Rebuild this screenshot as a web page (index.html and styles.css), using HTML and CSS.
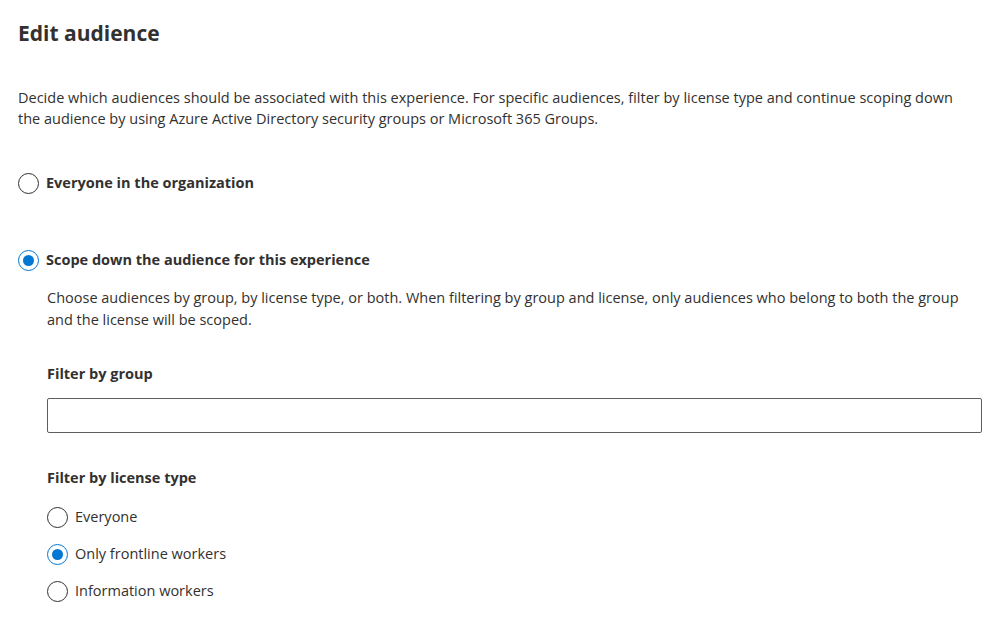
FILE: index.html
```html
<!DOCTYPE html>
<html lang="en">
<head>
<meta charset="utf-8">
<title>Edit audience</title>
<link rel="stylesheet" href="styles.css">
</head>
<body>
<main class="page">
  <h1 class="title">Edit audience</h1>
  <p class="intro">Decide which audiences should be associated with this experience. For specific audiences, filter by license type and continue scoping down the audience by using Azure Active Directory security groups or Microsoft 365 Groups.</p>

  <label class="radio radio-main first">
    <span class="circle"></span>
    <span class="label-text strong">Everyone in the organization</span>
  </label>

  <label class="radio radio-main second">
    <span class="circle checked"></span>
    <span class="label-text strong">Scope down the audience for this experience</span>
  </label>

  <section class="scope">
    <p class="scope-desc">Choose audiences by group, by license type, or both. When filtering by group and license, only audiences who belong to both the group and the license will be scoped.</p>

    <div class="field-label group-label">Filter by group</div>
    <div class="text-input"></div>

    <div class="field-label license-label">Filter by license type</div>
    <div class="options">
      <label class="radio">
        <span class="circle"></span>
        <span class="label-text">Everyone</span>
      </label>
      <label class="radio">
        <span class="circle checked"></span>
        <span class="label-text">Only frontline workers</span>
      </label>
      <label class="radio">
        <span class="circle"></span>
        <span class="label-text">Information workers</span>
      </label>
    </div>
  </section>
</main>
</body>
</html>
```

FILE: styles.css
```css
* { box-sizing: border-box; }

html, body {
  margin: 0;
  padding: 0;
  background: #ffffff;
}

body {
  font-family: "Open Sans", "Noto Sans", "Liberation Sans", sans-serif;
  color: #323130;
  font-size: 14.5px;
}

.page {
  padding: 19px 24px 0 18px;
  display: flex;
  flex-direction: column;
}

.title {
  margin: 0;
  font-size: 21px;
  line-height: 28px;
  font-weight: 700;
  color: #323130;
}

.intro {
  margin: 40px 0 0 0;
  padding-right: 16px;
  line-height: 21px;
}

.radio {
  display: flex;
  align-items: center;
  height: 22px;
  gap: 7px;
}

.radio-main.first { margin-top: 43px; }
.radio-main.second { margin-top: 55px; }

.circle {
  width: 21px;
  height: 21px;
  border-radius: 50%;
  border: 1px solid #323130;
  display: flex;
  align-items: center;
  justify-content: center;
  flex: none;
}

.circle.checked {
  border-color: #0078d4;
}

.circle.checked::after {
  content: "";
  width: 11px;
  height: 11px;
  border-radius: 50%;
  background: #0078d4;
}

.label-text {
  line-height: 20px;
}

.label-text.strong {
  font-weight: 700;
}

.scope {
  padding-left: 29px;
  display: flex;
  flex-direction: column;
}

.scope-desc {
  margin: 16px 0 0 0;
  line-height: 22px;
}

.field-label {
  font-weight: 700;
  line-height: 20px;
}

.group-label { margin-top: 33px; }

.text-input {
  margin-top: 14px;
  height: 35px;
  border: 1px solid #605e5c;
  border-radius: 2px;
  background: #fff;
}

.license-label { margin-top: 35px; }

.options {
  margin-top: 18px;
  display: flex;
  flex-direction: column;
  gap: 15px;
}
```
